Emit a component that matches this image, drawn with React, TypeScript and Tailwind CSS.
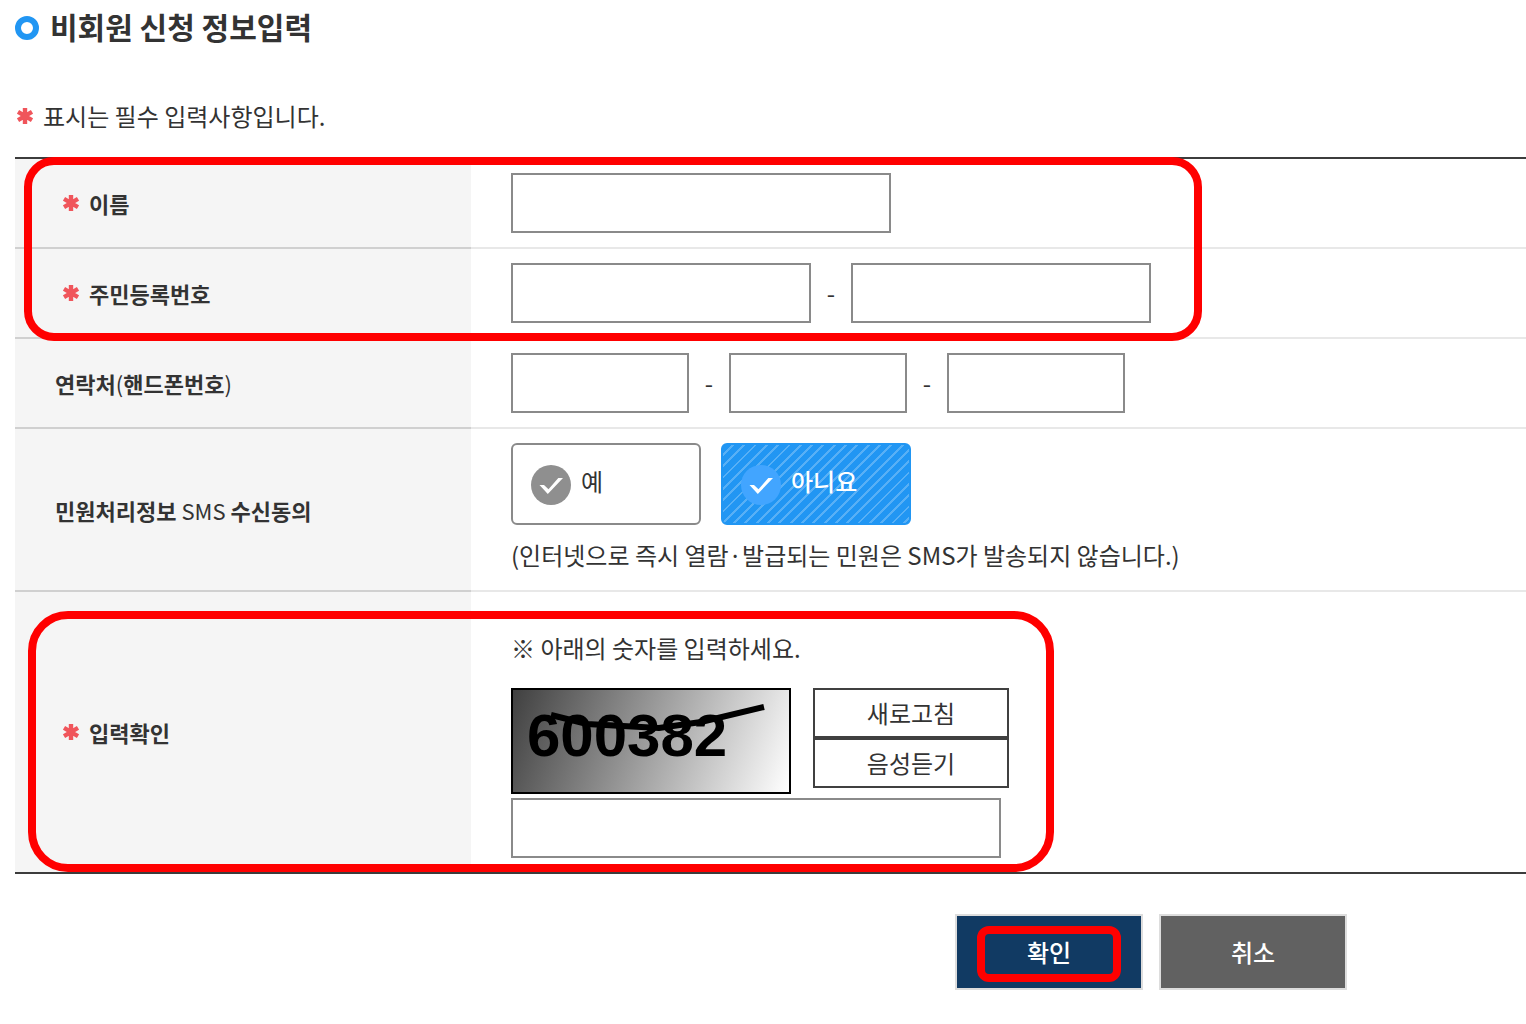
import { useState } from "react"
import type { ReactNode } from "react"

const inputStyle = "block h-[60px] border-2 border-[#8a8a8a] bg-white px-3 text-2xl outline-none"

const Star = () => (
    <svg viewBox="0 0 16 16" className="h-4 w-4 shrink-0" aria-hidden="true">
        <path d="M8 0v16M1 3.800l14 8.400M1 12.200l14-8.400" stroke="#f0555b" strokeWidth="4.400" fill="none" />
    </svg>
)

const Check = ({ on }: { on: boolean }) => (
    <svg viewBox="0 0 40 40" className="mt-2 h-10 w-10 shrink-0" aria-hidden="true">
        <circle cx="20" cy="20" r="20" fill={on ? "#42a5ff" : "#8f8f8f"} />
        <path d="M8.500 20h4.500l4.500 4.300L27.300 13h4.700L16.800 29z" fill="#fff" />
    </svg>
)

type RowProps = {
    title: ReactNode, required?: boolean, last?: boolean, children: ReactNode, id?: string
}
const Row = (props: RowProps) => {
    const { title, required, last, children, id } = props
    return (
        <tr>
            <th scope="row" className={`w-[456px] bg-[#f5f5f5] pl-10 text-left align-middle text-[22px] leading-8 font-bold ${last ? "" : "border-b-2 border-[#d0d0d0]"}`}>
                <div className={`flex items-center ${required ? "gap-[10px] pl-2" : ""}`}>
                    {required && <Star />}
                    {id ? <label htmlFor={id}>{title}</label> : <span>{title}</span>}
                </div>
            </th>
            <td className={`py-[14px] pl-10 align-top ${last ? "" : "border-b-2 border-[#e8e8e8]"}`}>{children}</td>
        </tr>
    )
}

const Dash = () => <span className="w-10 text-center">-</span>

const App = () => {
    const [sms, setSms] = useState("no")
    const choices = [
        { value: "yes", label: "예" },
        { value: "no", label: "아니요" },
    ]
    return (
        <div className="overflow-hidden bg-white pb-8 pl-[15px] font-['Noto_Sans_CJK_KR',sans-serif] text-2xl leading-9 text-[#333]">
            <h1 className="flex items-center gap-[11px] pt-[6px] text-[30px] leading-10 font-bold">
                <svg viewBox="0 0 24 24" className="mt-1 h-6 w-6" aria-hidden="true">
                    <circle cx="12" cy="12" r="9" stroke="#2196f3" strokeWidth="6" fill="#fff" />
                </svg>
                비회원 신청 정보입력
            </h1>
            <p className="mt-[52px] flex items-center gap-[10px] pl-[2px]">
                <Star />
                표시는 필수 입력사항입니다.
            </p>

            <form onSubmit={(e) => e.preventDefault()}>
                <div className="relative mt-[23px]">
                    <table className="w-full border-separate border-spacing-0 border-y-2 border-[#3c3c3c]">
                        <tbody>
                            <Row title="이름" required id="name">
                                <input id="name" type="text" className={`${inputStyle} w-[380px]`} />
                            </Row>
                            <Row title="주민등록번호" required id="rrn1">
                                <div className="flex items-center">
                                    <input id="rrn1" type="text" className={`${inputStyle} w-[300px]`} />
                                    <Dash />
                                    <input type="password" aria-label="주민등록번호 뒷자리" className={`${inputStyle} w-[300px]`} />
                                </div>
                            </Row>
                            <Row title={<>연락처<span className="font-normal">(</span>핸드폰번호<span className="font-normal">)</span></>} id="tel1">
                                <div className="flex items-center">
                                    <input id="tel1" type="tel" className={`${inputStyle} w-[178px]`} />
                                    <Dash />
                                    <input type="tel" aria-label="연락처 가운데자리" className={`${inputStyle} w-[178px]`} />
                                    <Dash />
                                    <input type="tel" aria-label="연락처 끝자리" className={`${inputStyle} w-[178px]`} />
                                </div>
                            </Row>
                            <Row title={<>민원처리정보 <span className="font-normal">SMS</span> 수신동의</>}>
                                <div className="flex gap-5">
                                    {choices.map((c) => (
                                        <label key={c.value} className={`relative flex h-[82px] w-[190px] items-center gap-[10px] rounded-md border-2 pb-[6px] pl-[18px] ${sms === c.value ? "border-[#2196f3] bg-[repeating-linear-gradient(135deg,#2196f3_0_6px,#58b0f6_6px_8px)] font-medium text-white" : "border-[#8a8a8a] bg-white"}`}>
                                            <input type="radio" name="sms" value={c.value} checked={sms === c.value} onChange={() => setSms(c.value)} className="sr-only" />
                                            <Check on={sms === c.value} />
                                            {c.label}
                                        </label>
                                    ))}
                                </div>
                                <p className="mt-3 mb-[3px]">(인터넷으로 즉시 열람·발급되는 민원은 SMS가 발송되지 않습니다.)</p>
                            </Row>
                            <Row title="입력확인" required last id="captcha">
                                <p className="mt-6">※ 아래의 숫자를 입력하세요.</p>
                                <div className="mt-[22px] flex items-start gap-[22px]">
                                    <div className="h-[106px] w-[280px] border-2 border-black bg-[linear-gradient(111deg,#404040,#fff)]">
                                        <svg viewBox="0 0 276 102" className="h-full w-full">
                                            <text x="14" y="66" fontFamily="'Liberation Sans', sans-serif" fontSize="60" fontWeight="700">600382</text>
                                            <path d="M38 25L74 34L146 38L188 32L251 17" stroke="#000" strokeWidth="6" fill="none" />
                                        </svg>
                                    </div>
                                    <div className="flex w-[196px] flex-col">
                                        <button type="button" className="h-[50px] border-2 border-[#404040] bg-white">새로고침</button>
                                        <button type="button" className="h-[50px] border-2 border-[#404040] bg-white">음성듣기</button>
                                    </div>
                                </div>
                                <input id="captcha" type="text" className={`${inputStyle} mt-1 w-[490px]`} />
                            </Row>
                        </tbody>
                    </table>
                    <div className="pointer-events-none absolute top-0 left-[9px] h-[184px] w-[1178px] rounded-[30px] border-8 border-[#ff0000]"></div>
                    <div className="pointer-events-none absolute bottom-[2px] left-[13px] h-[261px] w-[1026px] rounded-[40px] border-8 border-[#ff0000]"></div>
                </div>

                <div className="mt-10 flex justify-end gap-4 pr-[179px] font-medium text-white">
                    <button type="submit" className="relative h-[76px] w-[188px] border-2 border-[#ddd] bg-[#113a63]">
                        확인
                        <span className="absolute top-[10px] left-5 h-14 w-36 rounded-xl border-8 border-[#ff0000]"></span>
                    </button>
                    <button type="button" className="h-[76px] w-[188px] border-2 border-[#ddd] bg-[#616161]">취소</button>
                </div>
            </form>
        </div>
    )
}

export default App
